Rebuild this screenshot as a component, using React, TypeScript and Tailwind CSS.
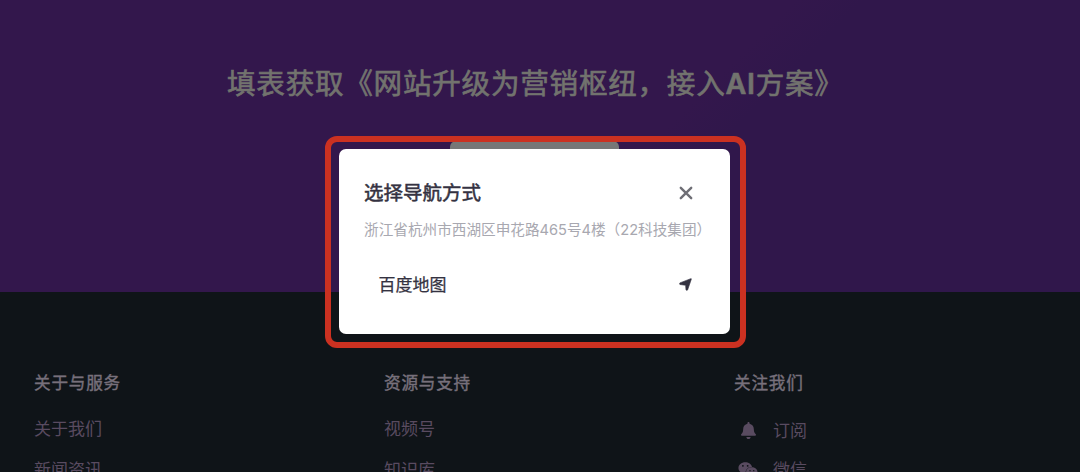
import { FaBell, FaWeixin } from "react-icons/fa";

const linkColumns = [
  { title: "关于与服务", links: ["关于我们", "新闻资讯"] },
  { title: "资源与支持", links: ["视频号", "知识库"] },
];

function Hero() {
  return (
    <section className="flex h-[292px] flex-col bg-[linear-gradient(135deg,#33174c_0%,#33174c_58%,#30174b_63%)] pt-[63px] pl-[227px]">
      <h1 className="h-[41px] text-[28.6px] leading-[41px] font-normal tracking-[0.73px] whitespace-nowrap text-[#72736e] [-webkit-text-stroke:0.65px_#72736e]">
        填表获取《网站升级为营销枢纽，接入<span className="font-semibold">AI</span>方案》
      </h1>
      <div className="mt-[37px] ml-[223px] h-12 w-[169px] rounded-md bg-[#777777]" />
    </section>
  );
}

function Footer() {
  return (
    <footer className="grid h-[180px] grid-cols-[350px_350px_1fr] bg-[#0f1418] pt-[79px] pl-[34px] text-[17px] text-[#594b60]">
      {linkColumns.map((column) => (
        <div key={column.title}>
          <h2 className="text-[16.6px] leading-6 font-normal tracking-[0.8px] text-[#77707b] [-webkit-text-stroke:0.4px_#77707b]">
            {column.title}
          </h2>
          <ul className="mt-[22px] flex flex-col gap-[17px]">
            {column.links.map((link) => (
              <li key={link} className="leading-6">
                {link}
              </li>
            ))}
          </ul>
        </div>
      ))}
      <div>
        <h2 className="text-[16.6px] leading-6 font-normal tracking-[0.8px] text-[#77707b] [-webkit-text-stroke:0.4px_#77707b]">
          关注我们
        </h2>
        <ul className="mt-[24px] flex flex-col gap-[15px]">
          <li className="flex items-center gap-[15px] pl-[5px] leading-6">
            <FaBell className="-mt-0.5 w-[19px] text-[17px]" />
            订阅
          </li>
          <li className="flex items-center gap-[15px] pl-[5px] leading-6">
            <FaWeixin className="-ml-px w-[20px] text-[20px]" />
            微信
          </li>
        </ul>
      </div>
    </footer>
  );
}

function NavigationDialog() {
  return (
    <div className="absolute top-[136px] left-[325px] h-[212px] w-[421px] rounded-[12px] border-6 border-[#cb3121] pt-[7px] pl-[8px]">
      <div
        role="dialog"
        className="h-[185px] w-[391px] rounded-[7px] bg-white pt-[30px] pr-[24px] pl-[25px]"
      >
        <div className="flex h-7 items-center justify-between pr-[13px]">
          <h3 className="text-[19.5px] leading-7 font-normal text-[#343241] [-webkit-text-stroke:0.5px_#343241]">
            选择导航方式
          </h3>
          <button aria-label="关闭">
            <svg viewBox="0 0 14 14" className="size-[14px]" fill="none" stroke="#6e6e75" strokeWidth="2.4" strokeLinecap="round">
              <path d="M1.8 1.8l10.4 10.4M12.2 1.8L1.8 12.2" />
            </svg>
          </button>
        </div>
        <p className="mt-[12px] text-[14.63px] leading-[22px] whitespace-nowrap text-[#a8a8b0]">
          浙江省杭州市西湖区申花路465号4楼（22科技集团）
        </p>
        <button className="mt-[32px] flex w-full items-center justify-between pr-[14px] pl-[14.5px] text-[17px] leading-6 font-normal text-[#343241] [-webkit-text-stroke:0.25px_#343241]">
          百度地图
          <svg viewBox="0 0 13 13" className="-mt-0.5 size-[13px]" fill="currentColor" stroke="currentColor" strokeWidth="0.6" strokeLinejoin="round">
            <path d="M0.9 4.9 11.7 0.7q.9-.3.6.6L8.6 12q-.8.7-1.6 0L6.6 7.3.9 6.5q-.7-.8 0-1.6z" />
          </svg>
        </button>
      </div>
    </div>
  );
}

export default function App() {
  return (
    <div className="relative h-[472px] w-[1080px] overflow-hidden bg-[#0f1418] font-['Inter','Noto_Sans_CJK_SC',sans-serif]">
      <Hero />
      <Footer />
      <NavigationDialog />
    </div>
  );
}
